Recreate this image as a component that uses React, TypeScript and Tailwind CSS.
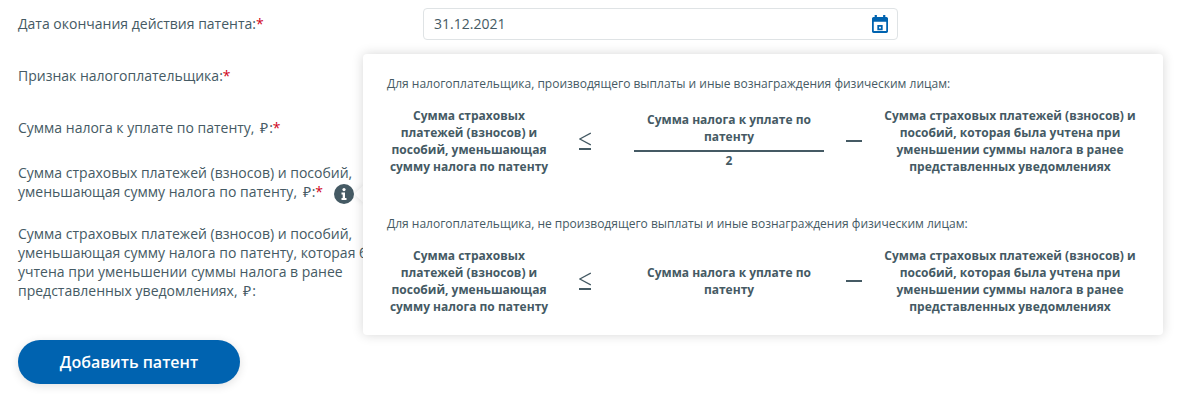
import React from 'react';

const font = { fontFamily: '"Open Sans", sans-serif' };

const Required = () => <span className="text-[#d0021b]">*</span>;
const Rub = () => <span className="ml-[2px] mr-[1px]">₽</span>;

const Fraction: React.FC<{ left: string[]; middle: string[]; right: string[]; denominator?: string }> = ({ left, middle, right, denominator }) => (
    <div className="flex items-center text-xs font-bold leading-[17px] text-center text-[#455a64]">
        <div className="w-[184px] shrink-0">
            {left.map((line) => <div key={line}>{line}</div>)}
        </div>
        <svg className="w-3 ml-[18px] shrink-0" width="12" height="18" viewBox="0 0 12 18" fill="none" stroke="#455a64" strokeWidth="1.4">
            <path d="M11.800 1 L0.800 7 L11.800 13" />
            <path d="M0 17 H12" strokeWidth="2" />
        </svg>
        <div className={`w-[190px] ml-[43px] shrink-0 ${denominator ? 'pb-[2px]' : ''}`}>
            {middle.map((line) => <div key={line}>{line}</div>)}
            {denominator && (
                <div className="border-t-2 border-[#455a64] mt-[5px] leading-[18px]">{denominator}</div>
            )}
        </div>
        <div className="w-4 h-0.5 ml-[22px] shrink-0 bg-[#455a64]"></div>
        <div className="w-[260px] ml-[18px] shrink-0">
            {right.map((line) => <div key={line}>{line}</div>)}
        </div>
    </div>
);

export default function App() {
    const left = ['Сумма страховых', 'платежей (взносов) и', 'пособий, уменьшающая', 'сумму налога по патенту'];
    const right = ['Сумма страховых платежей (взносов) и', 'пособий, которая была учтена при', 'уменьшении суммы налога в ранее', 'представленных уведомлениях'];
    const middle = ['Сумма налога к уплате по', 'патенту'];

    return (
        <div className="relative w-[1189px] h-[410px] bg-white overflow-hidden text-sm text-[#455a64]" style={font}>
            <div className="pl-[18px] pt-2">
                <div className="flex items-center h-8">
                    <div className="w-[405px] shrink-0">Дата окончания действия патента:<Required /></div>
                    <div className="w-[475px] h-8 flex items-center justify-between border border-[#dfe3e5] rounded-sm pl-[10px] pr-[9px]">
                        <span>31.12.2021</span>
                        <svg width="16" height="18" viewBox="0 0 18 20" fill="#0063b0" fillRule="evenodd">
                            <path d="M3 0h2.500v2h7V0H15v2h1.200C17.200 2 18 2.800 18 3.800v14.400c0 1-.8 1.800-1.800 1.800H1.800C.8 20 0 19.200 0 18.200V3.800C0 2.800.8 2 1.800 2H3zM2 7.500v10.500h14V7.500z" />
                            <path d="M6 11h6v6H6zM8 13h2v2H8z" />
                        </svg>
                    </div>
                </div>
                <div className="flex items-center h-8 mt-5">Признак налогоплательщика:<Required /></div>
                <div className="h-8 mt-5 leading-8">Сумма налога к уплате по патенту, <Rub />:<Required /></div>
                <div className="mt-[19px] leading-[19px]">
                    Сумма страховых платежей (взносов) и пособий,
                    <br />
                    уменьшающая сумму налога по патенту, <Rub />:<Required />
                </div>
                <div className="mt-[23px] w-[345px] leading-[19px] whitespace-nowrap">
                    Сумма страховых платежей (взносов) и пособий,
                    <br />
                    уменьшающая сумму налога по патенту, которая была
                    <br />
                    учтена при уменьшении суммы налога в ранее
                    <br />
                    представленных уведомлениях, <Rub />:
                </div>
                <button className="block mt-[40px] w-[222px] h-11 rounded-full bg-[#0063b0] text-white text-base font-semibold shadow-[0_2px_10px_rgba(0,0,0,0.12)]">
                    Добавить патент
                </button>
            </div>

            {/* info tooltip */}
            <div className="absolute left-[334px] top-[184px] w-5 h-5 rounded-full bg-[#455a64] flex items-center justify-center">
                <svg width="6" height="12" viewBox="0 0 6 12" fill="white">
                    <circle cx="3" cy="1.600" r="1.600" />
                    <path d="M0.500 4.500h3.500v5.500h1.500v2H0.500v-2h1.200V6.500H0.500z" />
                </svg>
            </div>
            <div className="absolute left-[357px] top-[188px] w-3 h-3 rotate-45 bg-white shadow-[0_0_6px_rgba(0,0,0,0.1)]"></div>
            <div className="absolute left-[363px] top-[54px] w-[800px] h-[281px] bg-white rounded shadow-[0_0_12px_rgba(0,0,0,0.16)] pl-[24px] pt-[21px] text-xs">
                <div className="leading-[17px]">Для налогоплательщика, производящего выплаты и иные вознаграждения физическим лицам:</div>
                <div className="mt-[15px] -ml-[24px] pl-[14px] h-[68px]">
                    <Fraction left={left} middle={middle} right={right} denominator="2" />
                </div>
                <div className="mt-[40px] leading-[17px]">Для налогоплательщика, не производящего выплаты и иные вознаграждения физическим лицам:</div>
                <div className="mt-[15px] -ml-[24px] pl-[14px]">
                    <Fraction left={left} middle={middle} right={right} />
                </div>
            </div>
        </div>
    );
}
